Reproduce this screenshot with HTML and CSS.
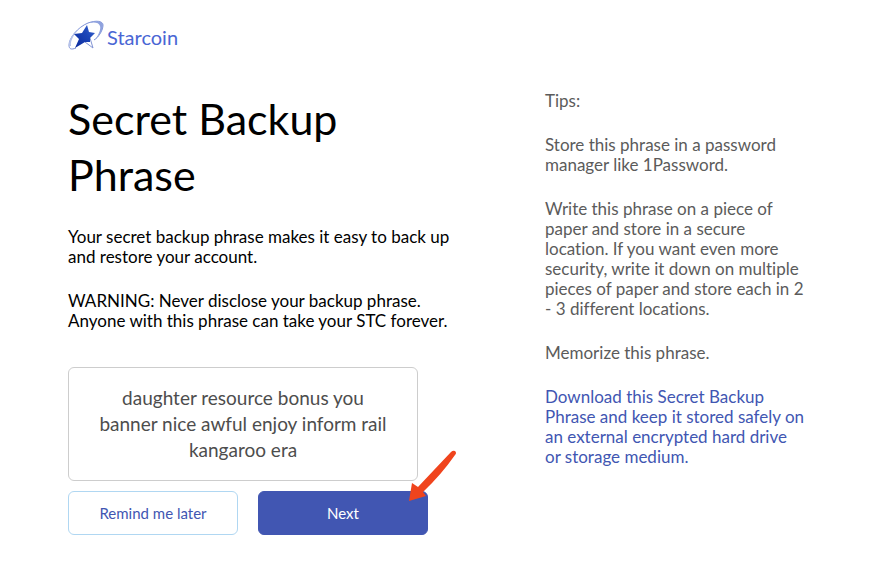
FILE: index.html
```html
<!DOCTYPE html>
<html lang="en">
<head>
<meta charset="utf-8">
<meta name="viewport" content="width=device-width, initial-scale=1">
<title>Starcoin - Secret Backup Phrase</title>
<link rel="stylesheet" href="styles.css">
</head>
<body>
<div class="page">
  <header class="brand">
    <svg class="brand-mark" viewBox="0 0 38 32" aria-hidden="true">
      <defs>
        <linearGradient id="star" x1="0" y1="1" x2="1" y2="0">
          <stop offset="0" stop-color="#0b2a9c"/>
          <stop offset="0.6" stop-color="#1c46b8"/>
          <stop offset="1" stop-color="#3f69d4"/>
        </linearGradient>
      </defs>
      <path d="M8 28C3 30 1 29 1 25C1 18 10 7 20 3C28 0 35 1 35 5C35 10 31 17 26 20" fill="none" stroke="#7c90d6" stroke-width="1"/>
      <path d="M20 3C28 0 35 1 35 5C35 10 31 16 27 20C31 14 33 9 32 6C31 2 26 2 20 3Z" fill="#8fa2de"/>
      <path d="M1 26C0 19 6 12 13 7C7 13 2 20 3 26Z" fill="#b6c3e9"/>
      <path d="M22 18L25 28L17 22Z" fill="#fff" stroke="#8294d4" stroke-width="1"/>
      <path d="M19 5L21 12L27 13L22 18L22 22L17 22L7 28L11 19L6 14L14 13Z" fill="url(#star)"/>
    </svg>
    <span class="brand-name">Starcoin</span>
  </header>
  <main class="content">
    <section class="backup">
      <h1>Secret Backup Phrase</h1>
      <p>Your secret backup phrase makes it easy to back up and restore your account.</p>
      <p>WARNING: Never disclose your backup phrase. Anyone with this phrase can take your STC forever.</p>
      <div class="phrase">daughter resource bonus you banner nice awful enjoy inform rail kangaroo era</div>
      <div class="actions">
        <button type="button" class="btn btn-outline">Remind me later</button>
        <button type="button" class="btn btn-primary">Next</button>
        <svg class="pointer" viewBox="0 0 48 52" aria-hidden="true">
          <path d="M1 51L4 33L10 37Q25 21 43 2Q45 0 47 1Q49 3 47 5Q33 25 15 42L18 46Z" fill="#f0441d"/>
        </svg>
      </div>
    </section>
    <aside class="tips">
      <p>Tips:</p>
      <p>Store this phrase in a password manager like 1Password.</p>
      <p>Write this phrase on a piece of paper and store in a secure location. If you want even more security, write it down on multiple pieces of paper and store each in 2 - 3 different locations.</p>
      <p>Memorize this phrase.</p>
      <p><a href="#download">Download this Secret Backup Phrase and keep it stored safely on an external encrypted hard drive or storage medium.</a></p>
    </aside>
  </main>
</div>
</body>
</html>
```
FILE: styles.css
```css
* {
  box-sizing: border-box;
}

body {
  margin: 0;
  background: #fff;
  color: #000;
  font-family: Lato, "Liberation Sans", sans-serif;
  font-size: 17px;
  font-variant-ligatures: none;
  line-height: 20px;
}

.page {
  padding: 20px 68px 36px;
}

.brand {
  display: flex;
  align-items: center;
  gap: 1px;
  height: 32px;
}

.brand-mark {
  width: 38px;
  height: 32px;
}

.brand-name {
  color: #4a66d4;
  font-size: 20px;
  line-height: 24px;
  padding-top: 2px;
}

.content {
  display: grid;
  grid-template-columns: minmax(0, 413fr) minmax(0, 265fr);
  gap: 64px;
  margin-top: 39px;
}

h1 {
  max-width: 300px;
  margin: 0 0 24px;
  font-size: 43px;
  font-weight: 400;
  line-height: 56px;
}

p {
  margin: 0 0 24px;
}

.backup p {
  max-width: 400px;
}

.phrase {
  max-width: 350px;
  margin-top: 36px;
  padding: 17px 24px;
  border: 1px solid #cdcdcd;
  border-radius: 6px;
  color: #4d4d4d;
  font-size: 19px;
  line-height: 26px;
  text-align: center;
}

.actions {
  position: relative;
  display: flex;
  gap: 20px;
  max-width: 360px;
  margin-top: 10px;
}

.btn {
  flex: 1;
  height: 44px;
  padding: 0 16px;
  border: 1px solid #b0d7f2;
  border-radius: 6px;
  background: #fff;
  color: #4156b2;
  font-family: inherit;
  font-size: 15px;
  line-height: 20px;
  cursor: pointer;
}

.btn-primary {
  border-color: #4156b2;
  background: #4156b2;
  color: #fff;
}

.pointer {
  position: absolute;
  right: -28px;
  bottom: 33px;
  width: 48px;
  height: 52px;
  pointer-events: none;
}

.tips {
  padding-right: 4px;
  color: #5b5b5b;
}

.tips a {
  color: #4156b2;
  text-decoration: none;
}
```
